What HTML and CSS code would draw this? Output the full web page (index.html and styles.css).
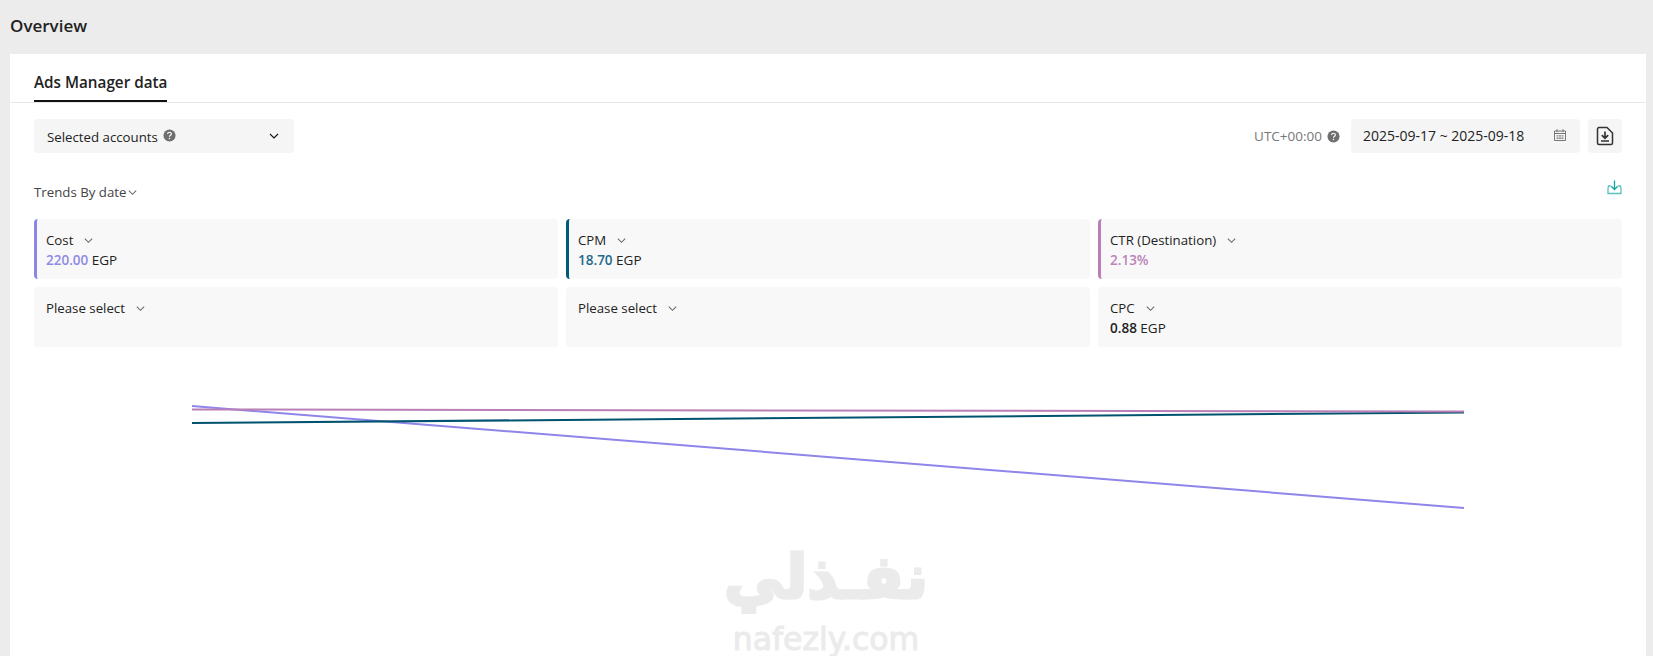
FILE: index.html
```html
<!DOCTYPE html>
<html lang="en">
<head>
  <meta charset="UTF-8">
  <title>Overview</title>
  <link rel="stylesheet" href="styles.css">
</head>
<body>
  <!-- Shared icons -->
  <svg class="icon-defs" aria-hidden="true">
    <symbol id="chevron" viewBox="0 0 12 12">
      <path d="M2 4l4 4 4-4" fill="none" stroke="currentColor" stroke-width="1.100"/>
    </symbol>
    <symbol id="help" viewBox="0 0 14 14">
      <circle cx="7" cy="7" r="6.500" fill="#6f6f6f"/>
      <path d="M5 5.400c0-1.200.9-1.900 2-1.900s2 .7 2 1.800c0 1.500-2 1.500-2 3" fill="none" stroke="#fff" stroke-width="1.300"/>
      <circle cx="7" cy="10.300" r=".85" fill="#fff"/>
    </symbol>
  </svg>

  <header class="page-title">Overview</header>

  <main class="panel">
    <div class="tabs">
      <div class="tab">Ads Manager data</div>
    </div>

    <!-- Filters -->
    <div class="toolbar">
      <div class="select-box">
        <span class="select-label">Selected accounts <svg class="help"><use href="#help"/></svg></span>
        <svg class="chevron-strong"><use href="#chevron"/></svg>
      </div>
      <div class="toolbar-right">
        <span class="timezone">UTC+00:00 <svg class="help"><use href="#help"/></svg></span>
        <div class="date-box">
          <span>2025-09-17 ~ 2025-09-18</span>
          <svg class="calendar" viewBox="0 0 14 14">
            <path d="M1.500 3h11v9.500h-11zM1.500 5.500h11M4 1.200v3M10 1.200v3" fill="none" stroke="#777" stroke-width="1"/>
            <path d="M3.500 7.200h2v1.300h-2zM6 7.200h2v1.300H6zM8.500 7.200h2v1.300h-2zM3.500 9.600h2v1.300h-2zM6 9.600h2v1.300H6zM8.500 9.600h2v1.300h-2z" fill="#888"/>
          </svg>
        </div>
        <div class="icon-button">
          <svg viewBox="0 0 18 20">
            <path d="M1.500 3a1.500 1.500 0 0 1 1.500-1.500h8l5.500 5.500V17a1.500 1.500 0 0 1-1.500 1.500H3A1.500 1.500 0 0 1 1.500 17z" fill="none" stroke="#333" stroke-width="1.500"/>
            <path d="M9 5.500v6.500M5.800 9.200L9 12.400l3.200-3.200M5 15h8" fill="none" stroke="#333" stroke-width="1.700"/>
          </svg>
        </div>
      </div>
    </div>

    <div class="trends-row">
      <span class="trends-label">Trends By date<svg class="chevron"><use href="#chevron"/></svg></span>
      <svg class="export" viewBox="0 0 15 15">
        <path d="M7.500 .5v9M4.300 6.300l3.200 3.200 3.200-3.200" fill="none" stroke="#16a39c" stroke-width="1.300"/>
        <path d="M3.800 6H1.500L1 9v4.500h13V9l-.5-3h-2.300" fill="none" stroke="#5cc0bb" stroke-width="1.300"/>
      </svg>
    </div>

    <!-- Metric cards -->
    <div class="metrics">
      <div class="metric metric-cost">
        <div class="metric-name">Cost <svg class="chevron"><use href="#chevron"/></svg></div>
        <div class="metric-line"><b class="metric-value">220.00</b> EGP</div>
      </div>
      <div class="metric metric-cpm">
        <div class="metric-name">CPM <svg class="chevron"><use href="#chevron"/></svg></div>
        <div class="metric-line"><b class="metric-value">18.70</b> EGP</div>
      </div>
      <div class="metric metric-ctr">
        <div class="metric-name">CTR (Destination) <svg class="chevron"><use href="#chevron"/></svg></div>
        <div class="metric-line"><b class="metric-value">2.13%</b></div>
      </div>
      <div class="metric">
        <div class="metric-name">Please select <svg class="chevron"><use href="#chevron"/></svg></div>
      </div>
      <div class="metric">
        <div class="metric-name">Please select <svg class="chevron"><use href="#chevron"/></svg></div>
      </div>
      <div class="metric">
        <div class="metric-name">CPC <svg class="chevron"><use href="#chevron"/></svg></div>
        <div class="metric-line"><b class="metric-value">0.88</b> EGP</div>
      </div>
    </div>

    <!-- Chart -->
    <svg class="chart" viewBox="0 0 1588 240">
      <line x1="158" y1="51" x2="1430" y2="153" stroke="#8f85ea" stroke-width="2"/>
      <line x1="158" y1="68" x2="1430" y2="57.500" stroke="#00536f" stroke-width="2"/>
      <line x1="158" y1="54.500" x2="1430" y2="56.500" stroke="#b97fb6" stroke-width="2"/>
    </svg>
  </main>

  <!-- Watermark -->
  <div class="watermark">
    <div class="watermark-ar" lang="ar" dir="rtl">نفـذلي</div>
    <div class="watermark-en">nafezly.com</div>
  </div>
</body>
</html>
```

FILE: styles.css
```css
/* Global */
html, body {
  height: 100%;
}
body {
  margin: 0;
  overflow: hidden;
  background-color: #ececec;
  color: #222;
  font-family: "Open Sans", "Liberation Sans", sans-serif;
  font-size: 13.25px;
}
svg {
  flex: none;
}
.icon-defs {
  display: none;
}

/* Title */
.page-title {
  height: 54px;
  box-sizing: border-box;
  padding: 15px 0 0 10px;
  font-size: 17px;
  line-height: 22px;
  font-weight: 600;
}

/* Panel */
.panel {
  margin: 0 7px 0 10px;
  height: 602px;
  box-sizing: border-box;
  background-color: #fff;
}

/* Tabs */
.tabs {
  height: 49px;
  box-sizing: border-box;
  padding: 0 24px;
  border-bottom: 1px solid #e8e8e8;
  display: flex;
}
.tab {
  height: 48px;
  box-sizing: border-box;
  padding-top: 17px;
  border-bottom: 2px solid #111;
  font-size: 15.25px;
  line-height: 22px;
  font-weight: 600;
}

/* Toolbar */
.toolbar {
  margin: 16px 24px 0;
  display: flex;
  justify-content: space-between;
}
.select-box {
  width: 260px;
  height: 34px;
  box-sizing: border-box;
  padding: 0 13px;
  background-color: #f5f5f5;
  border-radius: 4px;
  display: flex;
  align-items: center;
  justify-content: space-between;
}
.select-label {
  display: flex;
  align-items: center;
  gap: 5px;
  padding-top: 2px;
}
.select-label .help {
  margin-top: -3px;
}
.timezone {
  display: flex;
  align-items: center;
  gap: 5px;
  font-size: 13.5px;
  color: #777;
  margin-right: 11px;
}
.help {
  width: 13px;
  height: 13px;
}
.chevron-strong {
  width: 12px;
  height: 12px;
  color: #111;
  margin-right: 1px;
}
.toolbar-right {
  display: flex;
  align-items: center;
}
.date-box {
  width: 229px;
  height: 34px;
  box-sizing: border-box;
  padding: 0 13px 2px 12px;
  background-color: #f5f5f5;
  border-radius: 4px;
  font-size: 14px;
  display: flex;
  align-items: center;
  justify-content: space-between;
}
.calendar {
  width: 14px;
  height: 14px;
}
.icon-button {
  width: 34px;
  height: 34px;
  margin-left: 8px;
  background-color: #f5f5f5;
  border-radius: 4px;
  display: flex;
  align-items: center;
  justify-content: center;
}
.icon-button svg {
  width: 18px;
  height: 20px;
}

/* Trends */
.trends-row {
  margin: 27px 24px 0;
  height: 39px;
  display: flex;
  justify-content: space-between;
}
.trends-label {
  height: 20px;
  padding-top: 2px;
  display: flex;
  align-items: center;
  gap: 1px;
  color: #444;
}
.chevron {
  width: 11px;
  height: 11px;
  color: #666;
}
.export {
  width: 15px;
  height: 15px;
}

/* Metric cards */
.metrics {
  margin: 0 24px;
  display: grid;
  grid-template-columns: repeat(3, 1fr);
  grid-auto-rows: 60px;
  gap: 8px;
}
.metric {
  padding: 11px 12px 0;
  background-color: #f8f8f8;
  border-radius: 4px;
  line-height: 20px;
}
.metric-name {
  display: flex;
  align-items: center;
  gap: 10px;
}
.metric-line {
  font-size: 13.5px;
}
.metric-value {
  font-weight: 600;
}
.metric-cost, .metric-cpm, .metric-ctr {
  padding-left: 9px;
  border-left: 3px solid;
}
.metric-cost {
  border-left-color: #8a86e6;
}
.metric-cost .metric-value {
  color: #8f8ae6;
}
.metric-cpm {
  border-left-color: #005a78;
}
.metric-cpm .metric-value {
  color: #1d6a8c;
}
.metric-ctr {
  border-left-color: #b980b8;
}
.metric-ctr .metric-value {
  color: #bb84bb;
}

/* Chart */
.chart {
  display: block;
  width: 1588px;
  height: 240px;
  margin: 8px 24px 0;
}

/* Watermark */
.watermark {
  position: absolute;
  left: 701px;
  top: 540px;
  width: 250px;
  text-align: center;
  color: #ebebeb;
  font-family: "DejaVu Sans", sans-serif;
  pointer-events: none;
}
.watermark-ar {
  font-size: 60px;
  font-weight: 700;
  line-height: 74px;
  -webkit-text-stroke: 3px #ebebeb;
}
.watermark-en {
  font-size: 31.5px;
  font-weight: 400;
  line-height: 36px;
  margin-top: 7px;
  -webkit-text-stroke: 1px #ebebeb;
}
```
